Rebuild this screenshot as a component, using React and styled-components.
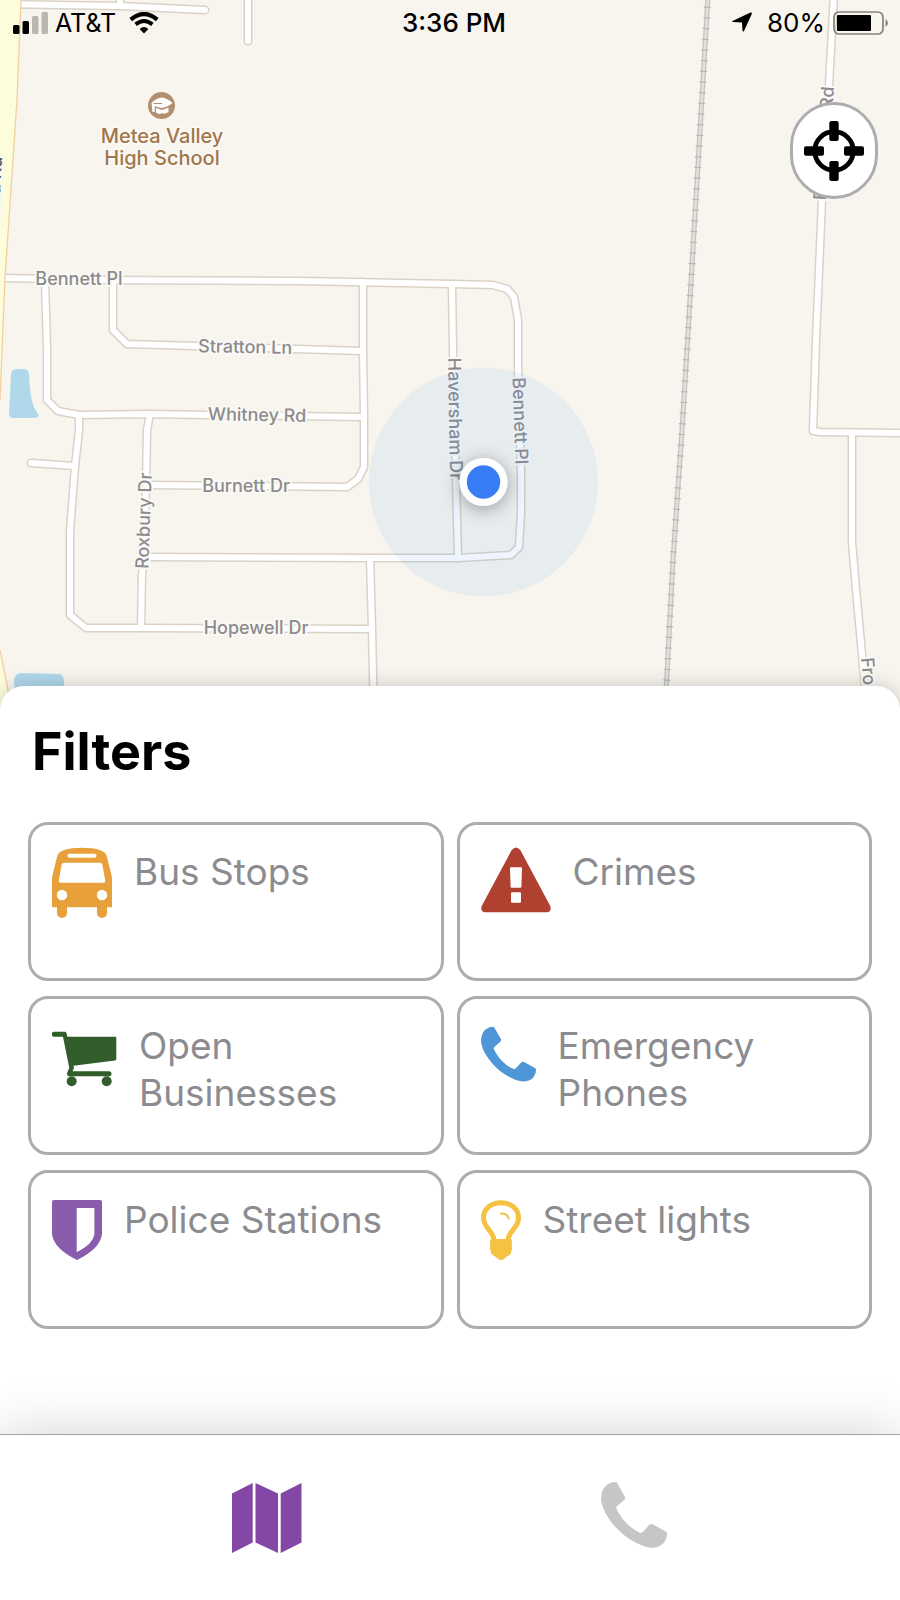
import React from "react";
import styled, { createGlobalStyle } from "styled-components";

const GlobalStyle = createGlobalStyle`
  * { box-sizing: border-box; }
  body { margin: 0; background: #fff; font-family: Inter, "Liberation Sans", sans-serif; color: #000; }
`;

const Screen = styled.div`
  display: flex;
  flex-direction: column;
  min-height: 100vh;
  background: #fff;
`;

const MapArea = styled.section`
  position: relative;
  height: 710px;
  overflow: hidden;
  background: #f8f5ee;
`;

const MapCanvas = styled.svg`
  display: block;
  width: 100%;
  height: 100%;
`;

const StreetLabel = styled.text`
  font-size: 18px;
  font-weight: 500;
  fill: ${(p) => p.$tone || "#8b8b8d"};
  stroke: #fbf9f5;
  stroke-width: 4px;
  stroke-linejoin: round;
  paint-order: stroke;
  text-anchor: ${(p) => p.$anchor || "middle"};
`;

const PlaceLabel = styled.text`
  font-size: 20px;
  font-weight: 500;
  fill: #a1764a;
  stroke: #fbf9f5;
  stroke-width: 4px;
  stroke-linejoin: round;
  paint-order: stroke;
  text-anchor: middle;
`;

const StatusBar = styled.header`
  position: absolute;
  top: 0;
  left: 0;
  right: 0;
  display: grid;
  grid-template-columns: 1fr auto 1fr;
  align-items: center;
  height: 45px;
  padding: 0 12px;
  font-size: 26px;
  line-height: 30px;
`;

const StatusGroup = styled.div`
  display: flex;
  align-items: center;
  justify-content: ${(p) => (p.$end ? "flex-end" : "flex-start")};
  gap: ${(p) => p.$gap}px;
`;

const Carrier = styled.span`
  padding-right: 6px;
  font-size: 25px;
`;

const Clock = styled.time`
  padding-left: 8px;
  font-weight: 500;
`;

const LocateButton = styled.button`
  position: absolute;
  top: 102px;
  right: 22px;
  display: flex;
  align-items: center;
  justify-content: center;
  width: 88px;
  height: 97px;
  padding: 0;
  border: 3px solid #adadb0;
  border-radius: 44px;
  background: #fff;
`;

const Sheet = styled.main`
  position: relative;
  flex: 1;
  margin-top: -24px;
  padding: 32px 28px 105px;
  border-radius: 24px 24px 0 0;
  background: #fff;
  box-shadow: 0 0 20px rgba(0, 0, 0, 0.2);
`;

const Title = styled.h1`
  margin: 0 0 36px;
  padding-left: 4px;
  font-size: 52px;
  line-height: 68px;
  font-weight: 700;
`;

const FilterGrid = styled.div`
  display: grid;
  grid-template-columns: 1fr 1fr;
  gap: 15px 13px;
`;

const FilterCard = styled.button`
  display: flex;
  align-items: flex-start;
  gap: 22px;
  min-height: 159px;
  padding: 17px 21px;
  border: 3px solid #adadb0;
  border-radius: 20px;
  background: #fff;
  color: #8b8b90;
  font: inherit;
  text-align: left;
`;

const FilterIcon = styled.svg`
  flex: none;
  display: block;
  width: ${(p) => p.$width}px;
  height: 80px;
  color: ${(p) => p.$color};
`;

const FilterName = styled.span`
  padding-top: 6px;
  max-width: 270px;
  font-size: 37px;
  line-height: 47px;
  font-weight: 400;
`;

const TabBar = styled.nav`
  position: relative;
  display: flex;
  height: 166px;
  padding: 0 83px;
  border-top: 1px solid #a3a3a3;
  background: #fff;
  box-shadow: 0 0 56px rgba(0, 0, 0, 0.18);
`;

const Tab = styled.a`
  flex: 1;
  display: flex;
  align-items: center;
  justify-content: center;
  color: ${(p) => (p.$active ? "#8447a5" : "#c6c6c8")};
`;

const ROADS = [
  "M-4 4 L120 6 L205 10",
  "M120 6 V-6",
  "M248 -6 V41",
  "M4 278 L100 280 L300 281 L452 284 L493 285 L507 289 L514 297 L518 320 V370 L521 473 V513 L519 547 L511 555 L458 558 L370 558 L144 557",
  "M452 284 L453 350 L456 480 L458 558",
  "M363 282 V350 L364 417 V467 L358 479 L347 487 L146 485",
  "M113 281 V330 L127 344 L195 346 L363 351",
  "M45 279 L47 350 V400 L58 411 L79 415 L150 414 L207 415 L364 417",
  "M79 415 V430 L75 466 L70 532 V615 L86 628 H142 L372 629",
  "M31 463 L75 466",
  "M150 414 L147 430 L146 485 L144 557 L142 575 L141 628",
  "M370 558 L372 629 L374 720",
  "M834 -6 L829 85 L822 200 L816 340 L813 431 L820 432 L910 433",
  "M852 433 V542 L857 600 L868 720",
];

const RAIL = "M708 -4 L687 350 L682 430 L673 560 L665 712";

function Roads() {
  return (
    <g fill="none" strokeLinejoin="round" strokeLinecap="round">
      {ROADS.map((d) => <path key={d} d={d} stroke="#dad2c7" strokeWidth="9" />)}
      {ROADS.map((d) => <path key={d} d={d} stroke="#fff" strokeWidth="6" />)}
    </g>
  );
}

function StreetMap() {
  return (
    <MapCanvas viewBox="0 0 900 710" preserveAspectRatio="xMidYMin slice" role="img" aria-label="Map around your location">
      <defs>
        <filter id="dotShadow" x="-60%" y="-60%" width="220%" height="220%">
          <feDropShadow dx="0" dy="3" stdDeviation="9" floodColor="#000" floodOpacity="0.35" />
        </filter>
      </defs>
      <path d="M11 375 Q11 369 17 369 H24 Q29 369 29 375 Q30 398 34 407 L39 416 Q37 418 33 418 H13 Q9 418 9 413Z" fill="#b0d8eb" />
      <path d="M14 681 Q14 675 20 673 L60 674 Q64 676 64 682 V712 H16Z" fill="#b0d8eb" />
      <Roads />
      <path d="M0 0 H21 L17 100 L5 278 L0 400Z" fill="#fdfcdb" />
      <path d="M21 0 L17 100 L5 278 L0 400" fill="none" stroke="#f3cf9f" strokeWidth="1.3" />
      <path d="M0 650 L8 690 L12 712 H0Z" fill="#fdfcdb" />
      <path d="M0 650 L8 690 L12 712" fill="none" stroke="#f3cf9f" strokeWidth="1.3" />
      <g fill="none">
        <path d={RAIL} stroke="#c3c3c1" strokeWidth="5" />
        <path d={RAIL} stroke="#e2e2de" strokeWidth="2.4" />
        <path d={RAIL} stroke="#b6b6b5" strokeWidth="7" strokeDasharray="1.2 9.5" />
      </g>

      <circle cx="161.500" cy="105.500" r="13.500" fill="#b48f6f" />
      <path d="M151.500 103 Q156 98 162 97.500 Q168 98.500 172.500 103 Q168 107 161.500 108 Q158 107.500 155 106 L154.500 112 H152.500Z" fill="#fff" />
      <path d="M156 108 L162 110 L168.500 107.500 V112 Q164 115 162 113 Q159 115 156 112.500Z" fill="#fff" />
      <path d="M153.500 103.500 H162" stroke="#b48f6f" strokeWidth="1" />
      <PlaceLabel x="162" y="143">Metea Valley</PlaceLabel>
      <PlaceLabel x="162" y="165">High School</PlaceLabel>

      <StreetLabel x="79" y="285">Bennett Pl</StreetLabel>
      <StreetLabel transform="translate(245 353) rotate(1)">Stratton Ln</StreetLabel>
      <StreetLabel transform="translate(257 421) rotate(1)">Whitney Rd</StreetLabel>
      <StreetLabel x="246" y="492">Burnett Dr</StreetLabel>
      <StreetLabel x="256" y="634">Hopewell Dr</StreetLabel>
      <StreetLabel transform="translate(150 521) rotate(-88)">Roxbury Dr</StreetLabel>
      <StreetLabel transform="translate(449 419) rotate(89)">Haversham Dr</StreetLabel>
      <StreetLabel transform="translate(514 421) rotate(88)">Bennett Pl</StreetLabel>
      <StreetLabel transform="translate(834 87) rotate(-86)" $anchor="end">Frontenac Rd</StreetLabel>
      <StreetLabel transform="translate(861 658) rotate(85)" $anchor="start">Frontenac Rd</StreetLabel>
      <StreetLabel transform="translate(2 157) rotate(-87)" $anchor="end" $tone="#555">Eola Rd</StreetLabel>

      <circle cx="483.500" cy="482" r="114.500" fill="#579afa" fillOpacity="0.1" />
      <circle cx="483.500" cy="482" r="24" fill="#fff" filter="url(#dotShadow)" />
      <circle cx="483.500" cy="482" r="16.700" fill="#387df6" />
    </MapCanvas>
  );
}

function SignalIcon() {
  return (
    <svg width="36" height="22" viewBox="0 0 36 22" aria-hidden="true">
      <rect x="1" y="13" width="6.500" height="9" rx="1.500" />
      <rect x="10.500" y="9" width="6.500" height="13" rx="1.500" />
      <rect x="20" y="4" width="6.500" height="18" rx="1.500" fill="#b9b6b0" />
      <rect x="29.500" y="0" width="6.500" height="22" rx="1.500" fill="#b9b6b0" />
    </svg>
  );
}

function WifiIcon() {
  return (
    <svg width="30" height="22" viewBox="0 0 30 22" aria-hidden="true">
      <path d="M1.800 7.600 Q15 -3.600 28.200 7.600" fill="none" stroke="#000" strokeWidth="4.200" />
      <path d="M6.600 12.400 Q15 5.600 23.400 12.400" fill="none" stroke="#000" strokeWidth="4" />
      <path d="M10.600 17 Q15 13.200 19.400 17 L15 21.500Z" />
    </svg>
  );
}

function BatteryIcon() {
  return (
    <svg width="56" height="24" viewBox="0 0 56 24" aria-hidden="true">
      <rect x="2" y="1" width="49" height="22" rx="5" fill="none" stroke="#85827d" strokeWidth="1.700" />
      <rect x="5" y="4" width="34" height="16" rx="1" />
      <path d="M53.500 8 Q56 10 56 12 Q56 14 53.500 16Z" fill="#85827d" />
    </svg>
  );
}

const PHONE =
  "M8 .7 Q12 -.6 13.300 .7 L20 12.500 Q20.300 14 19.300 15 L13 20.500 Q12.500 21.500 13 22.500 C17 31 24 38.500 32 42 Q33.800 42.700 34.800 41.600 L40.500 35.500 Q41.600 34.500 43 35.300 L54 41.200 Q55.200 42 55 43.500 C54.500 51 49 55 41.500 54.800 C22 52 1 30 0 14 Q0 4 8 .7Z";

const FILTERS = [
  {
    name: "Bus Stops", color: "#e8a13a", width: 60,
    art: (
      <>
        <path fillRule="evenodd" d="M5 15 C6 8.500 15 5.700 30 5.700 S54 8.500 55 15 L59 31 Q60 34 60 38 V65.300 H55 V71 A5 5 0 0 1 45 71 V65.300 H15 V71 A5 5 0 0 1 5 71 V65.300 H0 V38 Q0 34 1 31Z M17.500 11.700 A2 2 0 0 0 17.500 15.700 H42.500 A2 2 0 0 0 42.500 11.700Z M12 20.700 Q10 20.700 9.600 23 L6.800 38.500 Q6.500 40.800 8.500 40.800 H51.500 Q53.500 40.800 53.200 38.500 L50.400 23 Q50 20.700 48 20.700Z" />
        <circle cx="10" cy="53" r="5.200" fill="#fff" />
        <circle cx="50" cy="53" r="5.200" fill="#fff" />
      </>
    ),
  },
  {
    name: "Crimes", color: "#b04130", width: 70,
    art: (
      <>
        <path d="M30.700 8 Q35 3 39.300 8 L69.300 64 Q71 70.300 65.500 70.300 H4.500 Q-1 70.300 .7 64Z" />
        <path fill="#fff" d="M30 25.300 H40 Q41 25.300 41 26.300 L40.400 44.700 Q40.300 45.700 39.400 45.700 H30.600 Q29.700 45.700 29.600 44.700 L29 26.300 Q29 25.300 30 25.300Z" />
        <rect x="30" y="50.300" width="10" height="10.400" rx="1" fill="#fff" />
      </>
    ),
  },
  {
    name: "Open Businesses", color: "#305d29", width: 65,
    art: (
      <>
        <path d="M2.300 15.700 H12.500 Q14 15.700 14.500 17 L15.300 20.700 H63 Q64.300 20.700 64.300 22 V43 Q64.300 44.300 63 44.500 L21.500 49.800 L22 52 L20.500 55.300 H57 A2.500 2.500 0 0 1 57 60.300 H17 Q14.500 60 15.200 56.500 L17.300 52 L11 20.700 H2.300 A2.500 2.500 0 0 1 2.300 15.700Z" />
        <circle cx="19.700" cy="65.300" r="5" />
        <circle cx="54.700" cy="65.300" r="5" />
      </>
    ),
  },
  {
    name: "Emergency Phones", color: "#4f96d6", width: 55,
    art: <path transform="translate(0 10.700)" d={PHONE} />,
  },
  {
    name: "Police Stations", color: "#895dab", width: 50,
    art: (
      <path fillRule="evenodd" d="M2 10 H48 Q50 10 50 12 V44 Q48 59 25 70 Q2 59 0 44 V12 Q0 10 2 10Z M24.700 18 V62.300 Q41 54 42.400 44.500 V18Z" />
    ),
  },
  {
    name: "Street lights", color: "#f5c242", width: 40,
    art: (
      <>
        <path fill="none" stroke="currentColor" strokeWidth="5" d="M13 50 C12 40 2.500 38 2.500 28 C2.500 19 10 12.700 20 12.700 S37.500 19 37.500 28 C37.500 38 28 40 27 50" />
        <path fill="none" stroke="currentColor" strokeWidth="2" strokeLinecap="round" d="M20 23.500 Q26.500 23.500 27.700 28.500" />
        <path d="M10 49 H30 Q31.500 50.500 30.500 52.500 Q32 54.500 30.500 56.500 Q32 58.500 30.500 60.500 Q30.500 65 26.500 66 L22.500 69.300 Q20 70.700 17.500 69.300 L13.500 66 Q9.500 65 9.800 60.500 Q8 58.500 9.500 56.500 Q8 54.500 9.500 52.500 Q8.500 50.500 10 49Z" />
      </>
    ),
  },
];

export default function App() {
  return (
    <Screen>
      <GlobalStyle />
      <MapArea>
        <StreetMap />
        <StatusBar>
          <StatusGroup $gap={7}>
            <SignalIcon />
            <Carrier>AT&amp;T</Carrier>
            <WifiIcon />
          </StatusGroup>
          <Clock>3:36 PM</Clock>
          <StatusGroup $end $gap={7}>
            <svg width="28" height="21" viewBox="0 0 28 21" aria-hidden="true">
              <path d="M.5 9 L18.500 .5 Q20.300 0 19.800 2 L12 19 Q11 20.500 10.500 18.500 L10 10.500 L1 10 Q-.5 9.700 .5 9Z" />
            </svg>
            <span>80%</span>
            <BatteryIcon />
          </StatusGroup>
        </StatusBar>
        <LocateButton type="button" aria-label="Centre map on my location">
          <svg width="60" height="60" viewBox="0 0 60 60" aria-hidden="true">
            <circle cx="30" cy="30" r="19.300" fill="none" stroke="#000" strokeWidth="4.800" />
            <rect x="25.300" y="0" width="9.400" height="20" rx="2" />
            <rect x="25.300" y="40" width="9.400" height="20" rx="2" />
            <rect x="0" y="25.300" width="20" height="9.400" rx="2" />
            <rect x="40" y="25.300" width="20" height="9.400" rx="2" />
          </svg>
        </LocateButton>
      </MapArea>
      <Sheet>
        <Title>Filters</Title>
        <FilterGrid>
          {FILTERS.map((f) => (
            <FilterCard key={f.name} type="button">
              <FilterIcon $width={f.width} $color={f.color} viewBox={`0 0 ${f.width} 80`} fill="currentColor" aria-hidden="true">
                {f.art}
              </FilterIcon>
              <FilterName>{f.name}</FilterName>
            </FilterCard>
          ))}
        </FilterGrid>
      </Sheet>
      <TabBar>
        <Tab href="#map" aria-label="Map" $active>
          <svg width="70" height="70" viewBox="0 0 70 70" fill="currentColor" aria-hidden="true">
            <path d="M0 10.500 L20.700 0 V59.500 L0 70Z M23.500 0 L46 10.500 V70 L23.500 59.500Z M48.700 10.500 L69.500 0 V59.500 L48.700 70Z" />
          </svg>
        </Tab>
        <Tab href="#phone" aria-label="Phone">
          <svg width="66" height="72" viewBox="0 0 55 60" fill="currentColor" aria-hidden="true">
            <path d={PHONE} />
          </svg>
        </Tab>
      </TabBar>
    </Screen>
  );
}
